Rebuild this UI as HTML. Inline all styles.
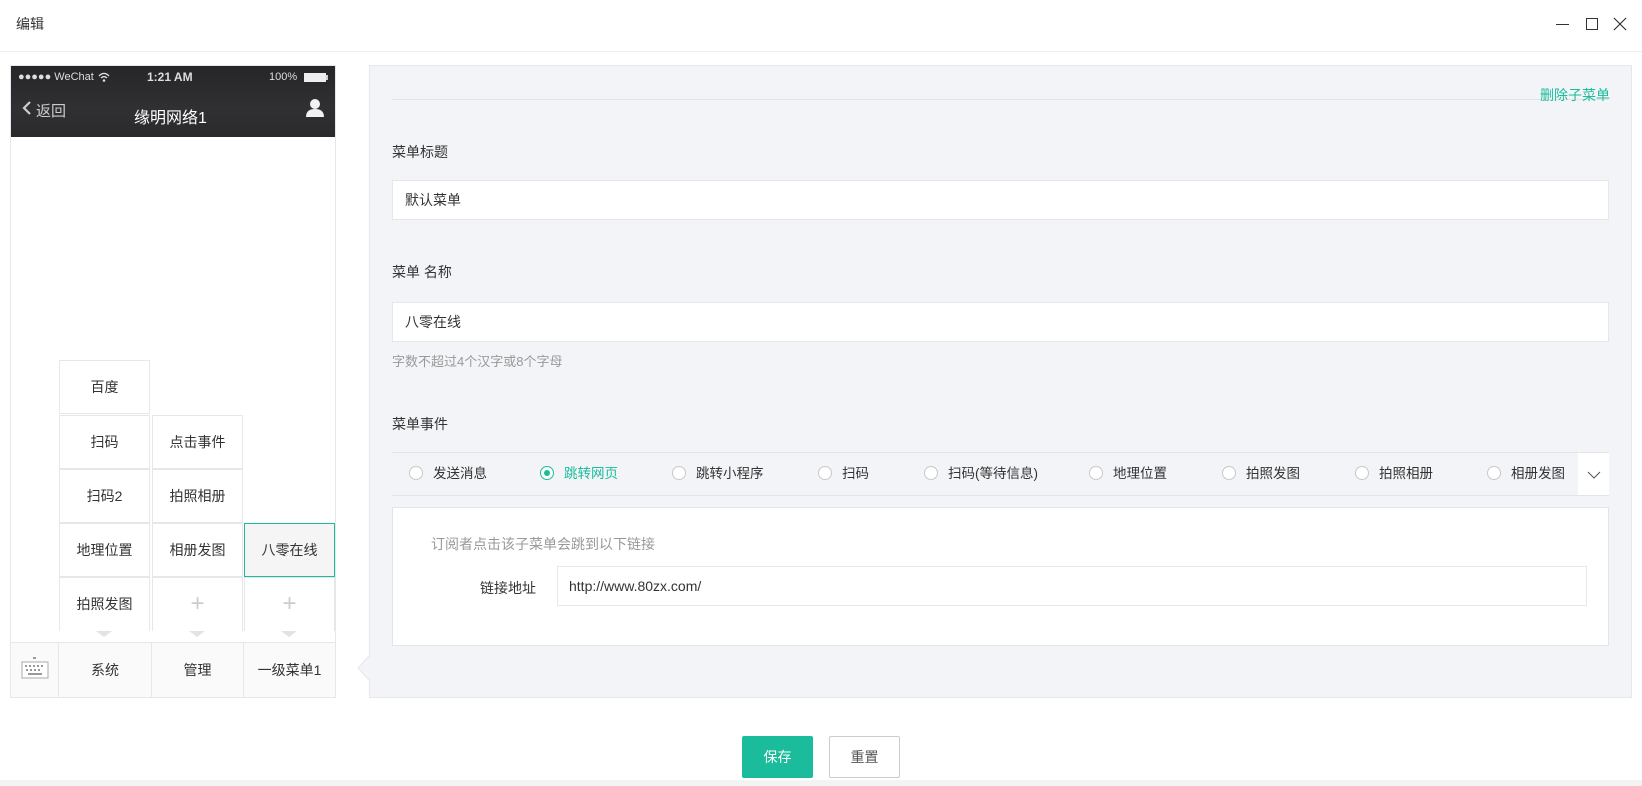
<!DOCTYPE html>
<html><head><meta charset="utf-8"><style>
*{box-sizing:border-box;margin:0;padding:0}
body{width:1642px;height:786px;background:#fff;font-family:"Liberation Sans","Noto Sans CJK SC",sans-serif;font-size:14px;color:#333;position:relative;overflow:hidden}
.a{position:absolute}
.cell{position:absolute;width:91px;height:54px;border:1px solid #e7e7eb;background:#fff;text-align:center;line-height:52px;font-size:14px;color:#333}
.plus{color:#ccc;font-size:24px;font-weight:200}
.bot{position:absolute;top:643px;height:54px;border-left:1px solid #e7e7eb;background:#fafafa;text-align:center;line-height:54px}
.tri{position:absolute;top:631px;width:0;height:0;border-left:8px solid transparent;border-right:8px solid transparent;border-top:6px solid #e3e3e3}
.lbl{position:absolute;left:392px;font-size:14px;color:#333}
.inp{position:absolute;left:392px;width:1217px;height:40px;background:#fff;border:1px solid #e7e7eb;padding-left:12px;line-height:38px;font-size:14px}
.r{position:absolute;top:464px;font-size:13.5px;color:#333;line-height:20px}
.r i{display:inline-block;width:14px;height:14px;border:1px solid #c8c8c8;border-radius:50%;vertical-align:-2px;margin-right:10px;background:#fff;position:relative}
</style></head><body>
<div class="a" style="left:16px;top:14px;font-size:14px">编辑</div>
<div class="a" style="left:1556px;top:24px;width:13px;height:1px;background:#333"></div>
<div class="a" style="left:1586px;top:18px;width:12px;height:12px;border:1.5px solid #333"></div>
<svg class="a" style="left:1613px;top:17px" width="14" height="14"><path d="M1 1L13 13M13 1L1 13" stroke="#333" stroke-width="1.2"/></svg>
<div class="a" style="left:0;top:51px;width:1642px;height:1px;background:#eee"></div>

<!-- phone -->
<div class="a" style="left:10px;top:65px;width:326px;height:633px;border:1px solid #e7e7eb;background:#fff"></div>
<div class="a" style="left:11px;top:66px;width:324px;height:71px;background:linear-gradient(#262628,#303032 60%,#2a2a2c)"></div>
<div class="a" style="left:18px;top:71px;color:#ddd;font-size:11px">●●●●● WeChat</div>
<svg class="a" style="left:98px;top:72px" width="12" height="10"><path d="M1 4Q6 -1 11 4M3 6Q6 3 9 6" stroke="#ddd" stroke-width="1.3" fill="none"/><circle cx="6" cy="8.5" r="1.3" fill="#ddd"/></svg>
<div class="a" style="left:147px;top:70px;color:#ddd;font-size:12px;font-weight:bold">1:21 AM</div>
<div class="a" style="left:269px;top:71px;color:#ddd;font-size:11px">100%</div>
<div class="a" style="left:304px;top:73px;width:22px;height:9px;background:#eee"></div>
<div class="a" style="left:326px;top:75px;width:2px;height:5px;background:#ccc"></div>
<svg class="a" style="left:22px;top:100px" width="10" height="16"><path d="M8 2L2 8L8 14" stroke="#ccc" stroke-width="2.2" fill="none"/></svg>
<div class="a" style="left:36px;top:100px;color:#ccc;font-size:15px">返回</div>
<div class="a" style="left:134px;top:104px;color:#fff;font-size:16px">缘明网络1</div>
<svg class="a" style="left:305px;top:98px" width="20" height="20"><circle cx="10" cy="6" r="5" fill="#f2f2f2"/><path d="M1 19Q1 11 10 11Q19 11 19 19Z" fill="#f2f2f2"/></svg>

<div class="cell" style="left:59px;top:360px">百度</div>
<div class="cell" style="left:59px;top:415px">扫码</div>
<div class="cell" style="left:152px;top:415px">点击事件</div>
<div class="cell" style="left:59px;top:469px">扫码2</div>
<div class="cell" style="left:152px;top:469px">拍照相册</div>
<div class="cell" style="left:59px;top:523px">地理位置</div>
<div class="cell" style="left:152px;top:523px">相册发图</div>
<div class="cell" style="left:244px;top:523px;border:1px solid #1abc9c;background:#f5f5f5">八零在线</div>
<div class="cell" style="left:59px;top:577px;border-bottom:none">拍照发图</div>
<div class="cell plus" style="left:152px;top:577px;border-bottom:none">+</div>
<div class="cell plus" style="left:244px;top:577px;border-bottom:none">+</div>
<div class="tri" style="left:96px"></div><div class="tri" style="left:189px"></div><div class="tri" style="left:281px"></div>
<div class="a" style="left:11px;top:642px;width:324px;height:1px;background:#e7e7eb"></div>
<div class="a" style="left:11px;top:643px;width:47px;height:54px;background:#fafafa"></div>
<svg class="a" style="left:21px;top:656px" width="28" height="28"><rect x="1" y="6" width="26" height="16" fill="#fff" stroke="#aaa"/><g fill="#999"><rect x="4" y="9" width="2" height="2"/><rect x="8" y="9" width="2" height="2"/><rect x="12" y="9" width="2" height="2"/><rect x="16" y="9" width="2" height="2"/><rect x="20" y="9" width="2" height="2"/><rect x="5" y="13" width="2" height="2"/><rect x="9" y="13" width="2" height="2"/><rect x="13" y="13" width="2" height="2"/><rect x="17" y="13" width="2" height="2"/><rect x="7" y="17" width="14" height="2"/><rect x="12" y="1" width="3" height="2"/></g></svg>
<div class="bot" style="left:58px;width:93px">系统</div>
<div class="bot" style="left:151px;width:92px">管理</div>
<div class="bot" style="left:243px;width:92px">一级菜单1</div>

<!-- right panel -->
<div class="a" style="left:369px;top:65px;width:1263px;height:633px;background:#f3f4f8;border:1px solid #e7e7eb"></div>
<svg class="a" style="left:357px;top:655px" width="14" height="26"><path d="M13 0L1 13L13 26" fill="#f3f4f8" stroke="#e7e7eb"/></svg>
<div class="a" style="left:392px;top:99px;width:1217px;height:1px;background:#e4e4e8"></div>
<div class="a" style="left:1540px;top:85px;color:#1abc9c;font-size:14px">删除子菜单</div>
<div class="lbl" style="top:142px">菜单标题</div>
<div class="inp" style="top:180px">默认菜单</div>
<div class="lbl" style="top:262px">菜单 名称</div>
<div class="inp" style="top:302px">八零在线</div>
<div class="lbl" style="top:351px;color:#999;font-size:13px">字数不超过4个汉字或8个字母</div>
<div class="lbl" style="top:414px">菜单事件</div>
<div class="a" style="left:392px;top:452px;width:1217px;height:1px;background:#e4e4e8"></div>
<div class="a" style="left:392px;top:495px;width:1217px;height:1px;background:#e4e4e8"></div>
<div class="r" style="left:409px"><i></i>发送消息</div>
<div class="r" style="left:540px;color:#1abc9c"><i style="border-color:#1abc9c"><b style="position:absolute;left:3px;top:3px;width:6px;height:6px;border-radius:50%;background:#1abc9c"></b></i>跳转网页</div>
<div class="r" style="left:672px"><i></i>跳转小程序</div>
<div class="r" style="left:818px"><i></i>扫码</div>
<div class="r" style="left:924px"><i></i>扫码(等待信息)</div>
<div class="r" style="left:1089px"><i></i>地理位置</div>
<div class="r" style="left:1222px"><i></i>拍照发图</div>
<div class="r" style="left:1355px"><i></i>拍照相册</div>
<div class="r" style="left:1487px"><i></i>相册发图</div>
<div class="a" style="left:1578px;top:453px;width:31px;height:42px;background:#fff"></div>
<svg class="a" style="left:1587px;top:471px" width="14" height="8"><path d="M1 1L7 7L13 1" stroke="#555" fill="none"/></svg>
<div class="a" style="left:392px;top:507px;width:1217px;height:139px;background:#fff;border:1px solid #e4e4e8"></div>
<div class="a" style="left:431px;top:534px;color:#999;font-size:14px">订阅者点击该子菜单会跳到以下链接</div>
<div class="a" style="left:480px;top:578px;font-size:14px">链接地址</div>
<div class="a" style="left:557px;top:566px;width:1030px;height:40px;border:1px solid #e7e7eb;padding-left:11px;line-height:38px;font-size:14px">http://www.80zx.com/</div>

<div class="a" style="left:742px;top:736px;width:71px;height:42px;background:#1abc9c;border-radius:2px;color:#fff;text-align:center;line-height:42px">保存</div>
<div class="a" style="left:829px;top:736px;width:71px;height:42px;border:1px solid #ccc;border-radius:2px;color:#555;text-align:center;line-height:40px">重置</div>
<div class="a" style="left:0;top:780px;width:1642px;height:6px;background:#f3f3f3"></div>
</body></html>
